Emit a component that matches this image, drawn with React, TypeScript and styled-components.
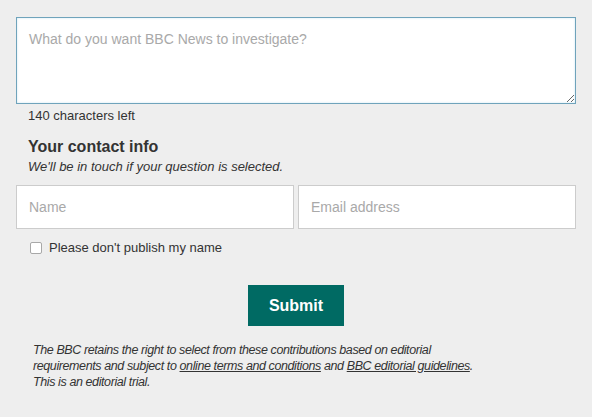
import styled, { createGlobalStyle } from 'styled-components';

const GlobalStyle = createGlobalStyle`
  html, body {
    margin: 0;
    padding: 0;
    background: #eeeeee;
  }
  body {
    font-family: "Liberation Sans", Arial, sans-serif;
    color: #333333;
  }
`;

const Panel = styled.form`
  box-sizing: border-box;
  width: 592px;
  min-height: 417px;
  padding: 17px 16px 20px;
  background: #eeeeee;
`;

const Question = styled.textarea`
  display: block;
  box-sizing: border-box;
  width: 100%;
  height: 87px;
  margin: 0;
  padding: 12px 12px;
  border: 1px solid #6fa3bb;
  box-shadow: inset 0 0 2px rgba(120, 190, 220, 0.45);
  background: #ffffff;
  font-family: inherit;
  font-size: 14px;
  line-height: 18px;
  color: #333;
  outline: none;
  resize: vertical;

  &::placeholder {
    color: #a9a9a9;
  }
`;

const CharCount = styled.div`
  margin: 4px 0 0 12px;
  font-size: 13px;
  line-height: 16px;
  color: #333;
`;

const Heading = styled.h2`
  margin: 13px 0 0 12px;
  font-size: 16px;
  line-height: 20px;
  font-weight: bold;
  color: #333;
`;

const SubText = styled.p`
  margin: 2px 0 0 12px;
  font-size: 13px;
  line-height: 16px;
  font-style: italic;
  color: #333;
`;

const InputRow = styled.div`
  display: grid;
  grid-template-columns: 278px 278px;
  column-gap: 4px;
  margin-top: 10px;
`;

const TextInput = styled.input`
  box-sizing: border-box;
  height: 44px;
  margin: 0;
  padding: 0 12px;
  border: 1px solid #cccccc;
  background: #ffffff;
  font-family: inherit;
  font-size: 14px;
  color: #333;
  outline: none;

  &::placeholder {
    color: #a9a9a9;
  }
`;

const CheckRow = styled.label`
  display: flex;
  align-items: center;
  gap: 7px;
  margin: 10px 0 0 14px;
  font-size: 13px;
  line-height: 18px;
  color: #333;
`;

const Box = styled.input`
  box-sizing: border-box;
  appearance: none;
  width: 12px;
  height: 12px;
  margin: 0;
  border: 1px solid #a8a8a8;
  border-radius: 2px;
  background: #ffffff;
`;

const ButtonRow = styled.div`
  display: flex;
  justify-content: center;
  margin-top: 28px;
`;

const SubmitButton = styled.button`
  width: 96px;
  height: 41px;
  border: none;
  background: #006a63;
  color: #ffffff;
  font-family: inherit;
  font-size: 16px;
  font-weight: bold;
  cursor: pointer;
`;

const Disclaimer = styled.p`
  margin: 16px 0 0 17px;
  font-size: 12.5px;
  letter-spacing: -0.4px;
  line-height: 16px;
  font-style: italic;
  color: #333;

  a {
    color: #333;
    text-decoration: underline;
  }
`;

export default function App() {
  return (
    <>
      <GlobalStyle />
      <Panel onSubmit={(e) => e.preventDefault()}>
        <Question placeholder="What do you want BBC News to investigate?" />
        <CharCount>140 characters left</CharCount>
        <Heading>Your contact info</Heading>
        <SubText>We'll be in touch if your question is selected.</SubText>
        <InputRow>
          <TextInput placeholder="Name" />
          <TextInput placeholder="Email address" />
        </InputRow>
        <CheckRow>
          <Box type="checkbox" />
          Please don't publish my name
        </CheckRow>
        <ButtonRow>
          <SubmitButton type="submit">Submit</SubmitButton>
        </ButtonRow>
        <Disclaimer>
          The BBC retains the right to select from these contributions based on editorial
          <br />
          requirements and subject to <a href="#terms">online terms and conditions</a> and{' '}
          <a href="#guidelines">BBC editorial guidelines</a>.
          <br />
          This is an editorial trial.
        </Disclaimer>
      </Panel>
    </>
  );
}
